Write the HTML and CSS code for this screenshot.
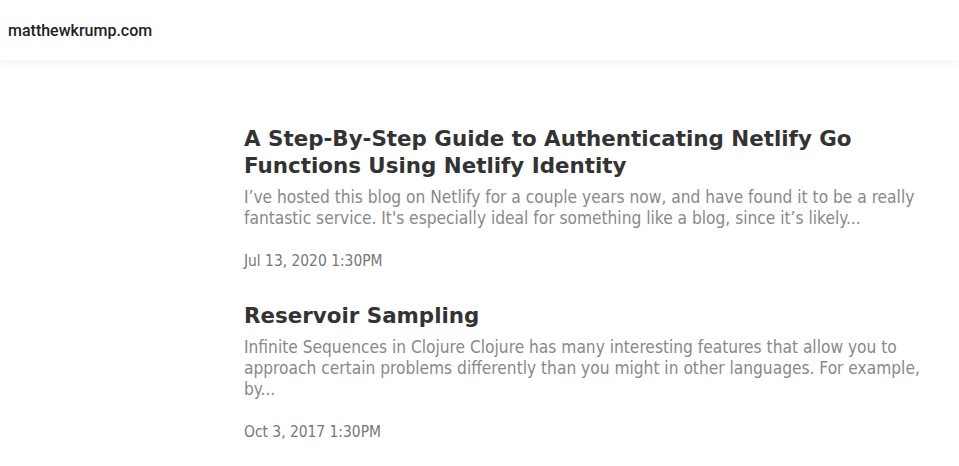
FILE: index.html
```html
<!DOCTYPE html>
<html lang="en">
<head>
<meta charset="utf-8">
<title>matthewkrump.com</title>
<link rel="stylesheet" href="styles.css">
</head>
<body>
<header class="site-header">
  <a class="brand" href="#">matthewkrump.com</a>
</header>
<main class="posts">
  <article class="post">
    <h2 class="post-title">A Step-By-Step Guide to Authenticating Netlify Go Functions Using Netlify Identity</h2>
    <p class="post-excerpt">I’ve hosted this blog on Netlify for a couple years now, and have found it to be a really fantastic service. It's especially ideal for something like a blog, since it’s likely...</p>
    <p class="post-date">Jul 13, 2020 1:30PM</p>
  </article>
  <article class="post">
    <h2 class="post-title">Reservoir Sampling</h2>
    <p class="post-excerpt">Infinite Sequences in Clojure Clojure has many interesting features that allow you to approach certain problems differently than you might in other languages. For example, by...</p>
    <p class="post-date">Oct 3, 2017 1:30PM</p>
  </article>
</main>
</body>
</html>
```

FILE: styles.css
```css
html, body {
  margin: 0;
  padding: 0;
  background: #fff;
}
.site-header {
  height: 60px;
  display: flex;
  align-items: center;
  padding-left: 8px;
  background: #fff;
  box-shadow: 0 2px 14px rgba(0,0,0,0.06);
}
.brand {
  font-family: Roboto, "Liberation Sans", Arial, sans-serif;
  font-size: 16px;
  font-weight: 500;
  color: #222;
  text-decoration: none;
}
.posts {
  padding: 65px 30px 0 244px;
  max-width: 686px;
}
.post {
  margin-bottom: 32px;
}
.post-title {
  font-family: "DejaVu Sans", sans-serif;
  font-weight: bold;
  font-size: 21.4px;
  line-height: 27px;
  color: #333;
  margin: 0 0 8px;
}
.post-excerpt {
  font-family: "DejaVu Sans", sans-serif;
  font-stretch: condensed;
  font-size: 17.2px;
  line-height: 21px;
  color: #888;
  margin: 0 0 23px;
}
.post-date {
  font-family: "DejaVu Sans", sans-serif;
  font-stretch: condensed;
  font-size: 15.4px;
  line-height: 18px;
  color: #777;
  margin: 0;
}
```
